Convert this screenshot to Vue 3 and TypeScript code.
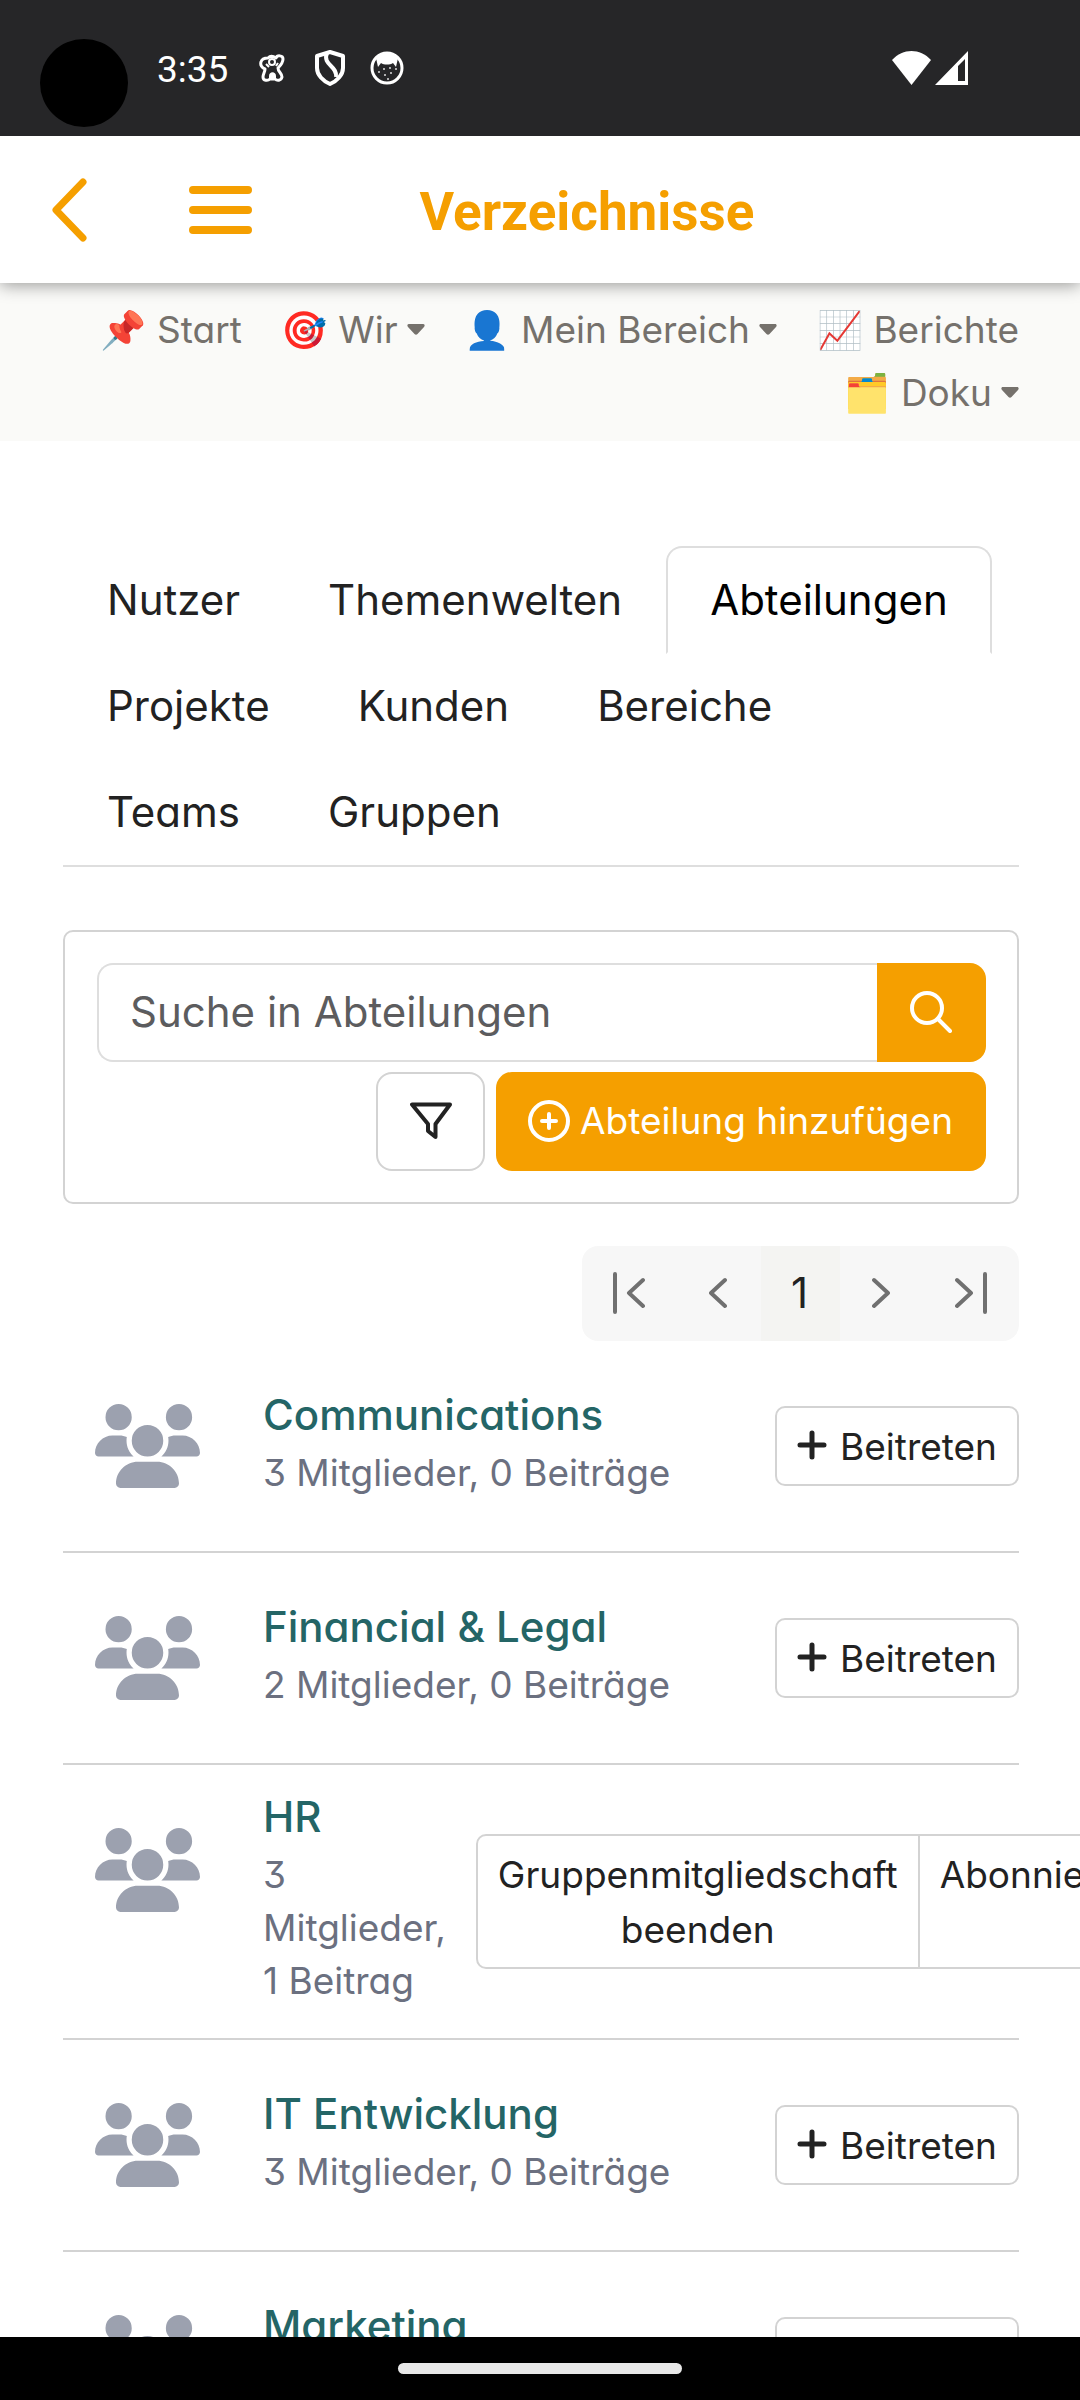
<script setup lang="ts">
import { ref } from 'vue'

interface NavItem { emoji: string; label: string; menu: boolean }
interface Department { name: string; meta: string; member: boolean }

const navItems: NavItem[] = [
  { emoji: '📌', label: 'Start', menu: false },
  { emoji: '🎯', label: 'Wir', menu: true },
  { emoji: '👤', label: 'Mein Bereich', menu: true },
  { emoji: '📈', label: 'Berichte', menu: false },
  { emoji: '🗂️', label: 'Doku', menu: true },
]

const tabs: string[] = ['Nutzer', 'Themenwelten', 'Abteilungen', 'Projekte', 'Kunden', 'Bereiche', 'Teams', 'Gruppen']
const activeTab = ref('Abteilungen')
const query = ref('')

const departments: Department[] = [
  { name: 'Communications', meta: '3 Mitglieder, 0 Beiträge', member: false },
  { name: 'Financial & Legal', meta: '2 Mitglieder, 0 Beiträge', member: false },
  { name: 'HR', meta: '3 Mitglieder, 1 Beitrag', member: true },
  { name: 'IT Entwicklung', meta: '3 Mitglieder, 0 Beiträge', member: false },
  { name: 'Marketing', meta: '3 Mitglieder, 0 Beiträge', member: false },
]
</script>

<template>
  <div class="screen">
    <div class="status">
      <span class="camera"></span>
      <span class="time">3:35</span>
      <svg class="s-bear" viewBox="0 0 26 28" width="26" height="28" fill="none" stroke="#fff" stroke-width="3" stroke-linejoin="round">
        <path d="M9 4C11 2 14 2 17 4C18 1 24 1 24 5C24 9 22 11 19 14C19 18 23 19 23 23C22 27 18 27 16 25H11C9 27 4 27 4 23C4 20 6 18 6 15C3 14 1 11 2 8C3 4 7 4 9 4Z" />
        <circle cx="13" cy="8" r="3" stroke-width="2" />
        <path d="M10 25V22C10 17 17 17 17 22V25Z" fill="#fff" stroke="none" />
        <path d="M7 10L10 13M19 9L17 12" stroke-width="2" />
      </svg>
      <svg class="s-shield" viewBox="0 0 30 36" width="30" height="36" fill="none" stroke="#fff" stroke-width="4" stroke-linejoin="round">
        <path d="M15 2L28 6V18C28 25 22 31 15 34C8 31 2 25 2 18V6Z" />
        <path d="M12 3C7 15 23 16 21 27" />
      </svg>
      <svg class="s-cat" viewBox="0 0 34 34" width="34" height="34">
        <circle cx="17" cy="17" r="15" fill="none" stroke="#fff" stroke-width="3" />
        <path d="M6 7C12 0 22 0 28 7L26 16L23 12C20 14 14 14 11 12L8 16Z" fill="#fff" />
        <g fill="#ddd"><circle cx="9" cy="21" r="1" /><circle cx="14" cy="18" r="1" /><circle cx="20" cy="17" r="1" /><circle cx="15" cy="24" r="1" /><circle cx="21" cy="22" r="1" /><circle cx="26" cy="18" r="1" /><circle cx="18" cy="28" r="1" /></g>
      </svg>
      <span class="spacer"></span>
      <svg viewBox="0 0 39 34" width="39" height="34"><path d="M0 9C11-3 28-3 39 9L19.500 34Z" fill="#fff" /></svg>
      <svg class="s-signal" viewBox="0 0 33 34" width="33" height="34"><path fill-rule="evenodd" d="M33 0V34H0ZM30 8L23 15V30H30Z" fill="#fff" /></svg>
    </div>

    <header class="appbar">
      <button class="icon-btn" type="button" aria-label="Zurück">
        <svg viewBox="0 0 36 64" width="36" height="64" fill="none" stroke="#f59f00" stroke-width="7" stroke-linecap="round" stroke-linejoin="round"><path d="M31 4L4 32L31 60" /></svg>
      </button>
      <button class="icon-btn menu" type="button" aria-label="Menü">
        <svg viewBox="0 0 63 48" width="63" height="48" stroke="#f59f00" stroke-width="8" stroke-linecap="round"><path d="M4 4H59M4 24H59M4 44H59" /></svg>
      </button>
      <h1>Verzeichnisse</h1>
    </header>

    <main class="content">
      <nav class="topnav">
        <a v-for="n in navItems" :key="n.label" href="#">
          <span>{{ n.emoji }} {{ n.label }}</span>
          <svg v-if="n.menu" class="caret" viewBox="0 0 18 12" width="18" height="12"><path d="M2 0H16C18 0 18 2 17 3L10.500 10C9.500 11 8.500 11 7.500 10L1 3C0 2 0 0 2 0Z" fill="currentColor" /></svg>
        </a>
      </nav>

      <div class="page">
        <ul class="tabs">
          <li v-for="t in tabs" :key="t">
            <a href="#" :class="{ active: t === activeTab }" @click.prevent="activeTab = t">{{ t }}</a>
          </li>
        </ul>

        <form class="filter-card" @submit.prevent>
          <div class="search">
            <input v-model="query" type="text" placeholder="Suche in Abteilungen" aria-label="Suche in Abteilungen" />
            <button type="submit" aria-label="Suchen">
              <svg viewBox="0 0 42 42" width="42" height="42" fill="none" stroke="#fff" stroke-width="4" stroke-linecap="round"><circle cx="17" cy="17" r="15" /><path d="M28 28L40 40" /></svg>
            </button>
          </div>
          <div class="actions">
            <button class="funnel" type="button" aria-label="Filter">
              <svg viewBox="0 0 42 42" width="42" height="42" fill="none" stroke="#222" stroke-width="4" stroke-linejoin="round"><path d="M2 4.500H40L25.500 24V37L18 31V24Z" /></svg>
            </button>
            <button class="add" type="button">
              <svg viewBox="0 0 42 42" width="42" height="42" fill="none" stroke="#fff" stroke-width="4" stroke-linecap="round"><circle cx="21" cy="21" r="19" /><path d="M14 21H28M21 14V28" /></svg>
              <span>Abteilung hinzufügen</span>
            </button>
          </div>
        </form>

        <nav class="pager" aria-label="Seiten">
          <button class="wide" type="button" aria-label="Erste Seite"><svg viewBox="0 0 32 42" width="32" height="42"><path d="M2 2V40M30 8L16 21L30 34" /></svg></button>
          <button type="button" aria-label="Vorherige Seite"><svg viewBox="0 0 18 42" width="18" height="42"><path d="M16 8L2 21L16 34" /></svg></button>
          <button class="current" type="button">1</button>
          <button type="button" aria-label="Nächste Seite"><svg viewBox="0 0 18 42" width="18" height="42"><path d="M2 8L16 21L2 34" /></svg></button>
          <button class="wide" type="button" aria-label="Letzte Seite"><svg viewBox="0 0 32 42" width="32" height="42"><path d="M2 8L16 21L2 34M30 2V40" /></svg></button>
        </nav>

        <ul class="list">
          <li v-for="d in departments" :key="d.name">
            <svg class="avatar" viewBox="0 0 640 512" width="105" height="84" fill="#9ca1af"><path d="M144 0a80 80 0 1 1 0 160A80 80 0 1 1 144 0zM512 0a80 80 0 1 1 0 160A80 80 0 1 1 512 0zM0 298.700C0 239.800 47.800 192 106.700 192h42.700c15.900 0 31 3.500 44.600 9.700c-1.300 7.200-1.900 14.700-1.900 22.300c0 38.200 16.800 72.500 43.300 96H21.300C9.600 320 0 310.400 0 298.700zM405.300 320h-.7c26.600-23.500 43.300-57.800 43.300-96c0-7.600-.7-15-1.900-22.300c13.600-6.300 28.700-9.700 44.600-9.700h42.700C592.200 192 640 239.800 640 298.700c0 11.800-9.600 21.300-21.300 21.300H405.300zM224 224a96 96 0 1 1 192 0 96 96 0 1 1-192 0zM128 485.300C128 411.700 187.700 352 261.300 352H378.700C452.300 352 512 411.700 512 485.300c0 14.700-11.900 26.700-26.700 26.700H154.700c-14.700 0-26.700-11.900-26.700-26.700z" /></svg>
            <div class="info">
              <a href="#">{{ d.name }}</a>
              <p>{{ d.meta }}</p>
            </div>
            <div v-if="d.member" class="group">
              <button type="button">Gruppenmitgliedschaft beenden</button>
              <button type="button">Abonnieren</button>
            </div>
            <div v-else class="group">
              <button type="button">
                <svg viewBox="0 0 30 30" width="30" height="30" stroke="#222" stroke-width="5" stroke-linecap="round"><path d="M3 15H27M15 3V27" /></svg>
                <span>Beitreten</span>
              </button>
            </div>
          </li>
        </ul>
      </div>
    </main>

    <div class="gesture"><span></span></div>
  </div>
</template>

<style>
body { margin: 0; background: #fff; }
</style>

<style scoped>
* { box-sizing: border-box; }
.screen {
  height: 100vh;
  display: flex;
  flex-direction: column;
  overflow: hidden;
  background: #fff;
  color: #222;
  font-family: Inter, "Liberation Sans", "Noto Color Emoji", sans-serif;
  font-feature-settings: "cv11", "cv09";
  font-size: 42px;
}
button, input { font: inherit; font-feature-settings: inherit; color: inherit; margin: 0; }
button { cursor: pointer; }
a { text-decoration: none; color: inherit; }
ul { list-style: none; margin: 0; padding: 0; }
svg { display: block; flex: none; }

.status { flex: none; position: relative; z-index: 2; height: 136px; padding: 0 112px 0 40px; display: flex; align-items: center; background: #262628; }
.camera { width: 88px; height: 88px; margin-top: 30px; border-radius: 50%; background: #000; }
.time { margin-left: 29px; padding-top: 3px; color: #fff; font: 37px/44px Roboto, sans-serif; }
.s-bear { margin-left: 31px; }
.s-shield { margin-left: 30px; }
.s-cat { margin-left: 25px; }
.spacer { flex: 1; }
.s-signal { margin-left: 4px; }

.appbar { flex: none; position: relative; z-index: 1; height: 147px; padding: 0 158px 0 52px; display: flex; align-items: center; background: #fff; box-shadow: 0 2px 16px rgba(0, 0, 0, 0.4); }
.icon-btn { flex: none; padding: 0; border: 0; background: none; }
.menu { margin-left: 101px; }
h1 { flex: 1; margin: 0; padding-top: 5px; text-align: center; color: #f59f00; font: 700 53px/60px Roboto, sans-serif; }

.content { flex: 1; min-height: 0; overflow-x: hidden; overflow-y: auto; scrollbar-width: none; }
.topnav { padding: 15px 61px 17px 63px; display: flex; flex-wrap: wrap; justify-content: flex-end; column-gap: 40px; background: #fafaf8; color: #75716c; font-size: 37px; line-height: 63px; }
.topnav a { display: flex; align-items: center; gap: 9px; }

.page { padding: 105px 61px 0 63px; }
.tabs { display: flex; flex-wrap: wrap; padding-bottom: 1px; border-bottom: 2px solid #dedede; line-height: 60px; }
.tabs a { display: block; margin-bottom: -2px; padding: 22px 42px; border: 2px solid transparent; }
.tabs .active { border-color: #dedede #dedede #fff; border-radius: 16px 16px 0 0; background: #fff; color: #000; }

.filter-card { margin-top: 63px; padding: 31px 31px 31px 32px; display: flex; flex-direction: column; gap: 10px; border: 2px solid #d3d3d3; border-radius: 10px; }
.search, .actions { display: flex; height: 99px; }
.search input { flex: 1; min-width: 0; padding: 0 31px 2px; border: 2px solid #dedede; border-right: 0; border-radius: 16px 0 0 16px; background: #fff; outline: 0; }
.search input::placeholder { color: #5c5c5e; opacity: 1; }
.search button { width: 109px; padding: 0 2px 2px 0; display: flex; align-items: center; justify-content: center; border: 0; border-radius: 0 16px 16px 0; background: #f59f00; }
.actions { justify-content: flex-end; gap: 11px; }
.funnel { width: 109px; padding: 0 0 2px; display: flex; align-items: center; justify-content: center; border: 2px solid #d3d3d3; border-radius: 16px; background: #fff; }
.add { padding: 0 33px 2px 32px; display: flex; align-items: center; gap: 10px; border: 0; border-radius: 16px; background: #f59f00; color: #fff; font-size: 37px; white-space: nowrap; }

.pager { width: fit-content; height: 95px; margin: 42px 0 0 auto; display: flex; border-radius: 16px; overflow: hidden; background: #f7f7f7; }
.pager button { width: 84px; padding: 0 2px 2px 0; display: flex; align-items: center; justify-content: center; border: 0; background: none; }
.pager .wide { width: 95px; }
.pager .current { width: 79px; background: #f4f4f2; }
.pager svg { fill: none; stroke: #707070; stroke-width: 4; stroke-linecap: round; stroke-linejoin: round; }

.list li { display: flex; align-items: center; border-bottom: 2px solid #d3d3d3; }
.avatar { align-self: flex-start; margin: 63px 63px 63px 32px; }
.info { flex: 1; padding: 21px 0 31px; }
.info a { color: #246566; font-weight: 500; line-height: 62px; }
.info p { margin: 0; color: #6b7080; font-size: 37px; line-height: 53px; }
.group { display: flex; min-width: min-content; margin-left: 30px; font-size: 37px; }
.group button { padding: 11px 20px 10px; display: flex; align-items: flex-start; justify-content: center; gap: 13px; border: 2px solid #d3d3d3; border-radius: 10px; background: #fff; line-height: 55px; }
.group button svg { margin-top: 11px; }
.group button:not(:last-child) { border-radius: 10px 0 0 10px; }
.group button + button { margin-left: -2px; border-radius: 0 10px 10px 0; }

.gesture { flex: none; height: 63px; display: flex; align-items: center; justify-content: center; background: #000; }
.gesture span { width: 284px; height: 11px; border-radius: 6px; background: #e8e8e8; }
</style>
